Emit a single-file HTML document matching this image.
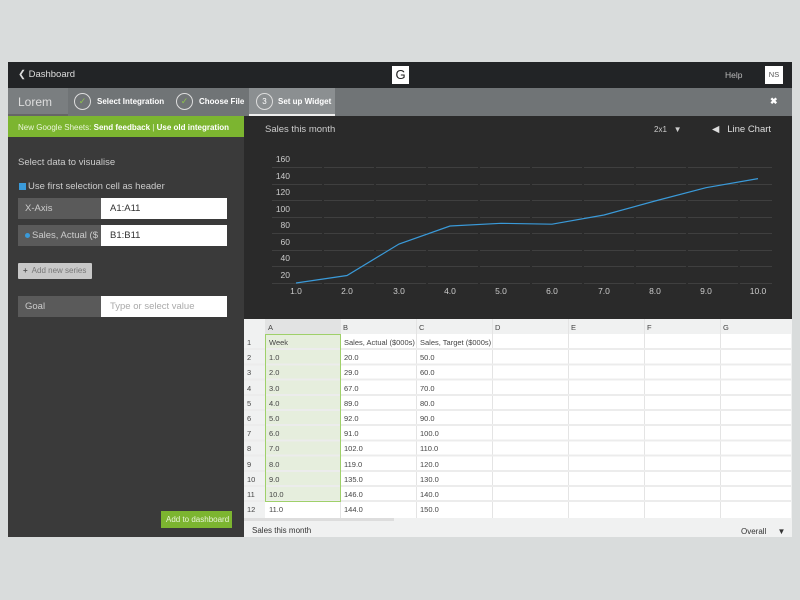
<!DOCTYPE html><html><head><style>
*{margin:0;padding:0;box-sizing:border-box}
body{width:800px;height:600px;background:#d9dcdc;font-family:"Liberation Sans",sans-serif;position:relative;overflow:hidden}
.a{position:absolute}
</style></head><body>
<div class="a" style="left:8px;top:62px;width:784px;height:475px;background:#3a3a3a"></div>
<div class="a" style="left:8px;top:62px;width:784px;height:26px;background:#222426"></div>
<div class="a" style="left:18px;top:69px;color:#ddd;font-size:9.5px">&#10094; Dashboard</div>
<div class="a" style="left:392px;top:66px;width:17px;height:18px;background:#fff;color:#222;font-size:13px;text-align:center;line-height:18px">G</div>
<div class="a" style="left:725px;top:70px;color:#bbb;font-size:8.5px">Help</div>
<div class="a" style="left:765px;top:66px;width:18px;height:18px;background:#fff;color:#555;font-size:7.5px;text-align:center;line-height:18px">NS</div>
<div class="a" style="left:8px;top:88px;width:784px;height:28px;background:#707476"></div>
<div class="a" style="left:8px;top:88px;width:60px;height:28px;background:#7a7e80;border-bottom:2px solid #666"></div>
<div class="a" style="left:18px;top:95px;color:#ddd;font-size:12px">Lorem</div>
<div class="a" style="left:249px;top:88px;width:86px;height:28px;background:#8b8f91;border-bottom:2px solid #eee"></div>
<div class="a" style="left:74px;top:93px;width:17px;height:17px;border:1px solid #ddd;border-radius:50%;color:#8bc34a;font-size:9px;text-align:center;line-height:15px">&#10003;</div>
<div class="a" style="left:97px;top:97px;color:#fff;font-size:8px;font-weight:bold">Select Integration</div>
<div class="a" style="left:176px;top:93px;width:17px;height:17px;border:1px solid #ddd;border-radius:50%;color:#8bc34a;font-size:9px;text-align:center;line-height:15px">&#10003;</div>
<div class="a" style="left:199px;top:97px;color:#fff;font-size:8px;font-weight:bold">Choose File</div>
<div class="a" style="left:256px;top:93px;width:17px;height:17px;border:1px solid #ddd;border-radius:50%;color:#fff;font-size:8px;text-align:center;line-height:15px">3</div>
<div class="a" style="left:278px;top:97px;color:#fff;font-size:8px;font-weight:bold">Set up Widget</div>
<div class="a" style="left:770px;top:96px;color:#fff;font-size:9px;font-weight:bold">&#10006;</div>
<div class="a" style="left:8px;top:116px;width:236px;height:21px;background:#7cb530"></div>
<div class="a" style="left:18px;top:123px;font-size:8px;color:#eaf5da">New Google Sheets: <b style="color:#fff">Send feedback</b> | <b style="color:#fff">Use old integration</b></div>
<div class="a" style="left:18px;top:157px;color:#ccc;font-size:9.5px">Select data to visualise</div>
<div class="a" style="left:19px;top:183px;width:7px;height:7px;background:#3a9ad9"></div>
<div class="a" style="left:28px;top:181px;color:#ccc;font-size:9.5px">Use first selection cell as header</div>
<div class="a" style="left:18px;top:198px;width:209px;height:21px;background:#fff"></div>
<div class="a" style="left:18px;top:198px;width:83px;height:21px;background:#5a5a5a"></div>
<div class="a" style="left:25px;top:203px;color:#ccc;font-size:9.5px">X-Axis</div>
<div class="a" style="left:110px;top:203px;color:#333;font-size:9.5px">A1:A11</div>
<div class="a" style="left:18px;top:225px;width:209px;height:21px;background:#fff"></div>
<div class="a" style="left:18px;top:225px;width:83px;height:21px;background:#5a5a5a;overflow:hidden"></div>
<div class="a" style="left:25px;top:233px;width:5px;height:5px;border-radius:50%;background:#3a9ad9"></div>
<div class="a" style="left:32px;top:230px;color:#ccc;font-size:9.5px;width:66px;overflow:hidden;white-space:nowrap">Sales, Actual ($...</div>
<div class="a" style="left:110px;top:230px;color:#333;font-size:9.5px">B1:B11</div>
<div class="a" style="left:18px;top:263px;width:74px;height:16px;background:#c8c8c8;border-radius:1px"></div>
<div class="a" style="left:23px;top:266px;color:#777;font-size:8px"><b style="color:#555">+</b>&nbsp; Add new series</div>
<div class="a" style="left:18px;top:296px;width:209px;height:21px;background:#fff"></div>
<div class="a" style="left:18px;top:296px;width:83px;height:21px;background:#5a5a5a"></div>
<div class="a" style="left:25px;top:301px;color:#ccc;font-size:9.5px">Goal</div>
<div class="a" style="left:110px;top:301px;color:#aaa;font-size:9.5px">Type or select value</div>
<div class="a" style="left:161px;top:511px;width:71px;height:17px;background:#7cb530"></div>
<div class="a" style="left:166px;top:515px;color:#e8f3d8;font-size:8px">Add to dashboard</div>
<div class="a" style="left:244px;top:116px;width:548px;height:203px;background:#2a2a2a"></div>
<div class="a" style="left:265px;top:124px;color:#ccc;font-size:9.5px">Sales this month</div>
<div class="a" style="left:654px;top:125px;color:#ccc;font-size:8px">2x1 &nbsp;&nbsp;&#9660;</div>
<div class="a" style="left:712px;top:124px;color:#ddd;font-size:9.5px">&#9664;&nbsp;&nbsp; Line Chart</div>
<svg class="a" style="left:0;top:0" width="800" height="600">
<g stroke="#3f3f3f" stroke-width="1" stroke-dasharray="50 2">
<line x1="272" x2="772" y1="167.5" y2="167.5"/><line x1="272" x2="772" y1="184.5" y2="184.5"/><line x1="272" x2="772" y1="200.5" y2="200.5"/><line x1="272" x2="772" y1="217.5" y2="217.5"/><line x1="272" x2="772" y1="233.5" y2="233.5"/><line x1="272" x2="772" y1="250.5" y2="250.5"/><line x1="272" x2="772" y1="266.5" y2="266.5"/><line x1="272" x2="772" y1="283.5" y2="283.5"/>
</g>
<g fill="#ccc" font-size="8.5" font-family="Liberation Sans" text-anchor="end">
<text x="290" y="162">160</text><text x="290" y="179">140</text><text x="290" y="195">120</text><text x="290" y="212">100</text><text x="290" y="228">80</text><text x="290" y="245">60</text><text x="290" y="261">40</text><text x="290" y="278">20</text>
</g>
<g fill="#ccc" font-size="8.5" font-family="Liberation Sans" text-anchor="middle">
<text x="296" y="294">1.0</text><text x="347" y="294">2.0</text><text x="399" y="294">3.0</text><text x="450" y="294">4.0</text><text x="501" y="294">5.0</text><text x="552" y="294">6.0</text><text x="604" y="294">7.0</text><text x="655" y="294">8.0</text><text x="706" y="294">9.0</text><text x="758" y="294">10.0</text>
</g>
<polyline fill="none" stroke="#3a9ad9" stroke-width="1.2" points="296,283 347,275.5 399,244 450,226 501,223.3 552,224.2 604,215 655,201 706,187.7 758,178.6"/>
</svg>
<div class="a" style="left:244px;top:319px;width:548px;height:218px;background:#f0f1f1"></div>
<svg class="a" style="left:244px;top:319px" width="548" height="202">
<rect x="21" y="15" width="526" height="184" fill="#fff"/>
<rect x="21" y="15" width="75" height="167" fill="#e6eedd"/>
<rect x="21" y="0" width="75" height="15" fill="#e2e3e3"/>
<g stroke="#e4e4e4">
<line x1="96.5" x2="96.5" y1="0" y2="199"/><line x1="172.5" x2="172.5" y1="0" y2="199"/><line x1="248.5" x2="248.5" y1="0" y2="199"/><line x1="324.5" x2="324.5" y1="0" y2="199"/><line x1="400.5" x2="400.5" y1="0" y2="199"/><line x1="476.5" x2="476.5" y1="0" y2="199"/>
</g>
<g stroke="#ececec" stroke-width="2">
<line x1="0" x2="547" y1="30" y2="30"/><line x1="0" x2="547" y1="45.5" y2="45.5"/><line x1="0" x2="547" y1="60.5" y2="60.5"/><line x1="0" x2="547" y1="76" y2="76"/><line x1="0" x2="547" y1="91" y2="91"/><line x1="0" x2="547" y1="106" y2="106"/><line x1="0" x2="547" y1="121.5" y2="121.5"/><line x1="0" x2="547" y1="136.5" y2="136.5"/><line x1="0" x2="547" y1="152" y2="152"/><line x1="0" x2="547" y1="167" y2="167"/><line x1="0" x2="547" y1="182" y2="182"/>
</g>
<rect x="21.5" y="15.5" width="75" height="167" fill="none" stroke="#9fd06a"/>
<rect x="0" y="199" width="150" height="3" fill="#ddd"/>
<g font-size="7.5" font-family="Liberation Sans" fill="#444">
<text x="24" y="11">A</text><text x="99" y="11">B</text><text x="175" y="11">C</text><text x="251" y="11">D</text><text x="327" y="11">E</text><text x="403" y="11">F</text><text x="479" y="11">G</text>
<text x="3" y="26">1</text><text x="3" y="41">2</text><text x="3" y="56">3</text><text x="3" y="72">4</text><text x="3" y="87">5</text><text x="3" y="102">6</text><text x="3" y="117">7</text><text x="3" y="132">8</text><text x="3" y="148">9</text><text x="3" y="163">10</text><text x="3" y="178">11</text><text x="3" y="193">12</text>
<text x="25" y="26">Week</text><text x="25" y="41">1.0</text><text x="25" y="56">2.0</text><text x="25" y="72">3.0</text><text x="25" y="87">4.0</text><text x="25" y="102">5.0</text><text x="25" y="117">6.0</text><text x="25" y="132">7.0</text><text x="25" y="148">8.0</text><text x="25" y="163">9.0</text><text x="25" y="178">10.0</text><text x="25" y="193">11.0</text>
<text x="100" y="26">Sales, Actual ($000s)</text><text x="100" y="41">20.0</text><text x="100" y="56">29.0</text><text x="100" y="72">67.0</text><text x="100" y="87">89.0</text><text x="100" y="102">92.0</text><text x="100" y="117">91.0</text><text x="100" y="132">102.0</text><text x="100" y="148">119.0</text><text x="100" y="163">135.0</text><text x="100" y="178">146.0</text><text x="100" y="193">144.0</text>
<text x="176" y="26">Sales, Target ($000s)</text><text x="176" y="41">50.0</text><text x="176" y="56">60.0</text><text x="176" y="72">70.0</text><text x="176" y="87">80.0</text><text x="176" y="102">90.0</text><text x="176" y="117">100.0</text><text x="176" y="132">110.0</text><text x="176" y="148">120.0</text><text x="176" y="163">130.0</text><text x="176" y="178">140.0</text><text x="176" y="193">150.0</text>
</g>
</svg>
<div class="a" style="left:252px;top:526px;color:#333;font-size:8px">Sales this month</div>
<div class="a" style="left:741px;top:527px;color:#333;font-size:8px">Overall &nbsp;&nbsp;&nbsp;&nbsp;&#9660;</div>
</body></html>
